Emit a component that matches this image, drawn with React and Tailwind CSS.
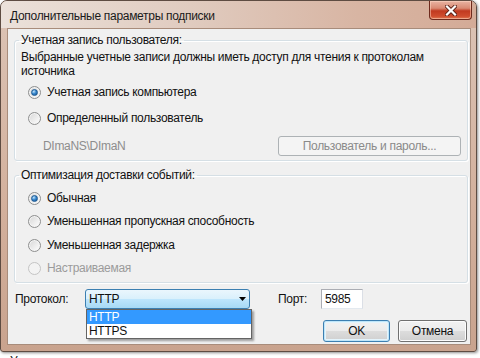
import React from "react";

function Radio({ checked, disabled }) {
  return (
    <span
      className={
        disabled
          ? "inline-flex w-[13px] h-[13px] shrink-0 rounded-full border border-[#c4c4c4] bg-[#f3f3f3] items-center justify-center"
          : "inline-flex w-[13px] h-[13px] shrink-0 rounded-full border border-[#8e8f8f] bg-[linear-gradient(135deg,#d6d6d6,#ffffff)] shadow-[inset_0_0_0_1px_#f4f4f4] items-center justify-center"
      }
    >
      {checked && (
        <span className="w-[7px] h-[7px] rounded-full bg-[radial-gradient(circle_at_35%_30%,#c5e6fb_0%,#3a8ad0_45%,#0f4d8c_100%)] border border-[#1d5a93]" />
      )}
    </span>
  );
}

function RadioRow({ label, checked, disabled, className }) {
  return (
    <div className={"h-[18px] flex items-center pl-[7px] " + className}>
      <Radio checked={checked} disabled={disabled} />
      <span className={disabled ? "ml-[6px] text-[#9b9b9b]" : "ml-[6px]"}>{label}</span>
    </div>
  );
}

export default function App() {
  return (
    <div className="w-[480px] h-[358px] overflow-hidden bg-white font-['Liberation_Sans',Arial,sans-serif] text-[12px] leading-[14px] tracking-[-0.3px] text-[#111] whitespace-nowrap">
      <div className="w-[477px] h-[352px] rounded-t-[7px] rounded-b-[3px] border border-[#5e4c42] bg-[linear-gradient(180deg,#dcc4b6_0%,#d3b09c_60%,#c9a38e_100%)] flex flex-col shadow-[1px_1px_3px_rgba(0,0,0,0.45)]">
        <div className="h-[27px] shrink-0 flex items-start justify-between rounded-t-[6px] bg-[linear-gradient(90deg,#ebe1da_0%,#e0cbbf_40%,#d8b5a3_75%,#d4ab97_100%)]">
          <div className="pl-[9px] pt-[7px] leading-[16px] text-[#1a1a1a]">Дополнительные параметры подписки</div>
          <div className="mr-[4px] w-[43px] h-[19px] rounded-b-[4px] border border-t-0 border-[#6e2a1d] bg-[linear-gradient(180deg,#e9b4a3_0%,#d98a73_40%,#c13a20_55%,#cf4d2e_85%,#e07a55_100%)] flex items-center justify-center shadow-[inset_0_0_0_1px_rgba(255,220,200,0.5)]">
            <svg width="12" height="11" viewBox="0 0 12 11">
              <path d="M2 1.5 L10 9.5 M10 1.5 L2 9.5" stroke="#5a2016" strokeWidth="4" strokeLinecap="square" />
              <path d="M2 1.5 L10 9.5 M10 1.5 L2 9.5" stroke="#ffffff" strokeWidth="2.2" strokeLinecap="square" />
            </svg>
          </div>
        </div>
        <div className="flex-1 ml-[6px] mr-[5px] mb-[6px] bg-[#f0f0f0] border border-[#a88c7b] flex flex-col">
          <fieldset className="mt-[4px] ml-[6px] mr-[2px] border border-[#d5dfe5] rounded-[3px] shadow-[inset_1px_1px_0_#ffffff,1px_1px_0_#ffffff]">
            <legend className="ml-[4px] px-[2px] leading-[14px]">Учетная запись пользователя:</legend>
            <div className="pl-[6px] pb-[4px]">
              <div className="pt-[3px] leading-[14px]">
                Выбранные учетные записи должны иметь доступ для чтения к протоколам
                <br />
                источника
              </div>
              <RadioRow className="mt-[5px]" label="Учетная запись компьютера" checked />
              <RadioRow className="mt-[8px]" label="Определенный пользователь" />
              <div className="mt-[9px] h-[20px] flex items-center justify-between pr-[6px]">
                <span className="pl-[22px] text-[#8d8d8d]">DImaNS\DImaN</span>
                <div className="w-[183px] h-[20px] rounded-[3px] border border-[#adb2b5] bg-[#f4f4f4] flex items-center justify-center text-[#8a8a8a]">
                  Пользователь и пароль...
                </div>
              </div>
            </div>
          </fieldset>
          <fieldset className="mt-[7px] ml-[6px] mr-[2px] border border-[#d5dfe5] rounded-[3px] shadow-[inset_1px_1px_0_#ffffff,1px_1px_0_#ffffff]">
            <legend className="ml-[4px] px-[2px] leading-[14px]">Оптимизация доставки событий:</legend>
            <div className="pl-[6px] pt-[7px] pb-[5px]">
              <RadioRow label="Обычная" checked />
              <RadioRow className="mt-[5px]" label="Уменьшенная пропускная способность" />
              <RadioRow className="mt-[6px]" label="Уменьшенная задержка" />
              <RadioRow className="mt-[5px]" label="Настраиваемая" disabled />
            </div>
          </fieldset>
          <div className="mt-[6px] h-[20px] flex items-center pl-[7px]">
            <span className="w-[70px]">Протокол:</span>
            <div className="relative w-[165px] h-[20px]">
              <div className="w-full h-full rounded-[3px] border border-[#3c7fb1] bg-[linear-gradient(180deg,#eaf6fd_0%,#d9f0fc_50%,#bee6fd_50%,#a7d9f5_100%)] flex items-center justify-between pl-[3px] pr-[3px]">
                <span>HTTP</span>
                <svg width="7" height="4" viewBox="0 0 7 4">
                  <path d="M0 0 H7 L3.5 4 Z" fill="#000" />
                </svg>
              </div>
              <div className="absolute left-[1px] top-[20px] w-[166px] h-[30px] border border-[#646464] bg-white shadow-[2px_2px_2px_rgba(0,0,0,0.35)]">
                <div className="h-[14px] leading-[14px] pl-[2px] bg-[#3399ff] text-white">HTTP</div>
                <div className="h-[14px] leading-[14px] pl-[2px]">HTTPS</div>
              </div>
            </div>
            <span className="ml-[28px] w-[43px]">Порт:</span>
            <div className="w-[42px] h-[20px] border border-[#abadb3] border-b-[#e3e9ef] border-r-[#dbdfe6] bg-white flex items-center pl-[3px]">
              5985
            </div>
          </div>
          <div className="mt-[11px] flex justify-end gap-[8px] mr-[3px]">
            <div className="w-[67px] h-[22px] rounded-[3px] border border-[#3c7fb1] bg-[linear-gradient(180deg,#f2f2f2_0%,#ebebeb_50%,#dddddd_50%,#cfcfcf_100%)] shadow-[inset_0_0_0_1px_#bfe6f9,inset_0_0_0_2px_#e4f4fc] flex items-center justify-center">
              OK
            </div>
            <div className="w-[69px] h-[22px] rounded-[3px] border border-[#707070] bg-[linear-gradient(180deg,#f2f2f2_0%,#ebebeb_50%,#dddddd_50%,#cfcfcf_100%)] shadow-[inset_0_0_0_1px_#fcfcfc] flex items-center justify-center">
              Отмена
            </div>
          </div>
        </div>
      </div>
      <div className="pl-[10px] leading-[14px] mt-[2px]">Учетная запись компьютера</div>
    </div>
  );
}
